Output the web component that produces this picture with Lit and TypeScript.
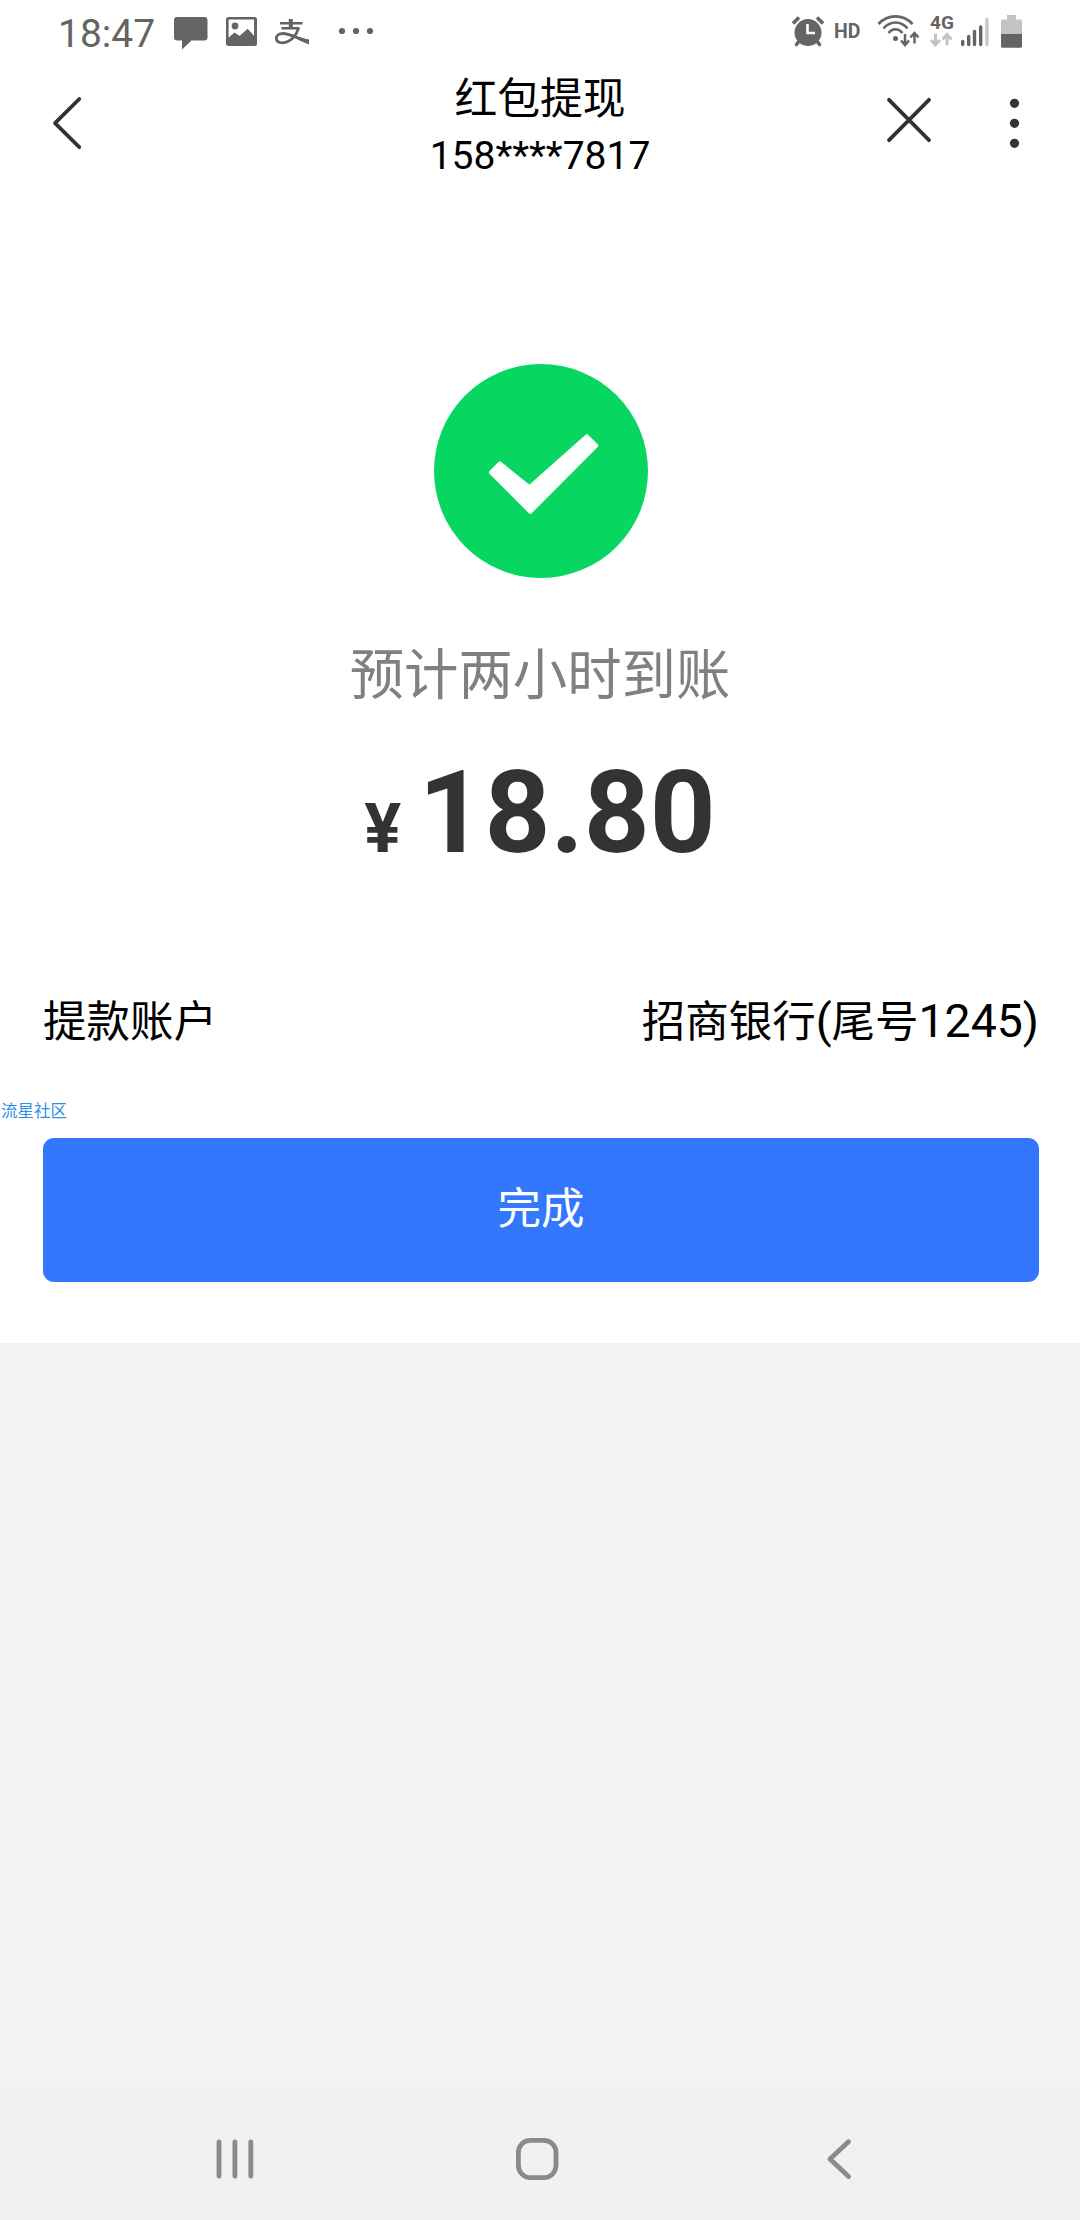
import { LitElement, html, css, svg } from "lit";
import { customElement, property } from "lit/decorators.js";

const INK = "#646464";

@customElement("status-bar")
class StatusBar extends LitElement {
  static styles = css`
    :host { display: flex; justify-content: space-between; height: 64px; padding: 0 58px 0 58px; box-sizing: border-box; color: #646464; }
    .side { display: flex; align-items: flex-start; }
    svg { display: block; flex: none; overflow: visible; }
    .time { font-size: 39px; line-height: 46px; padding-top: 11px; width: 116px; }
    .chat { margin-top: 17px; margin-right: 18px; }
    .photo { margin-top: 17px; margin-right: 18px; }
    .pay { margin-top: 18px; margin-right: 28px; }
    .more { margin-top: 27px; }
    .alarm { margin-top: 15px; margin-right: 9px; }
    .hd { font-size: 19.5px; font-weight: 700; line-height: 22px; padding-top: 21px; width: 43px; }
    .wifi { margin-top: 13px; margin-right: 11px; }
    .net { display: flex; flex-direction: column; width: 31px; }
    .gen { font-size: 19px; font-weight: 700; line-height: 20px; padding-top: 13px; height: 20px; }
    .signal { margin-top: 17px; margin-right: 12px; }
    .battery { margin-top: 15px; }
  `;
  render() {
    return html`
      <div class="side">
        <span class="time">18:47</span>
        <svg class="chat" width="34" height="33" viewBox="174 17 34 33">
          <path fill=${INK} d="M177 17h27.500a3 3 0 0 1 3 3v17.500a3 3 0 0 1-3 3H191.500L182 49.500V40.500H177a3 3 0 0 1-3-3V20a3 3 0 0 1 3-3z"/>
        </svg>
        <svg class="photo" width="31" height="30" viewBox="226 17 31 30">
          <path fill=${INK} fill-rule="evenodd" d="M228.500 17h26a2.500 2.500 0 0 1 2.500 2.500v24a2.500 2.500 0 0 1-2.500 2.500h-26a2.500 2.500 0 0 1-2.500-2.500v-24a2.500 2.500 0 0 1 2.500-2.500zM228.600 19.600V37.500l6-5 5 3.600 8-7.300 6.500 7V19.600z"/>
          <circle cx="235" cy="26" r="3.400" fill=${INK}/>
        </svg>
        <svg class="pay" width="35" height="28" viewBox="275 18 35 28">
          <g fill="none" stroke=${INK}>
            <path stroke-width="2.400" d="M280 23.300h22.500M281.500 28.300h18"/>
            <path stroke-width="4" d="M290.800 19v9.300"/>
            <path stroke-width="2.800" d="M298.500 28.300C296.500 35 290.500 42.800 282.500 42.800C278.500 42.800 276.300 41 276.300 38.300C276.300 35.500 279 33.500 283 33.500C289.500 33.500 298 38.500 309 41.500"/>
          </g>
          <path fill=${INK} d="M292 34.500C298 37 303 38.500 309 39.500V44.500C302 42 297 39 291 36z"/>
        </svg>
        <svg class="more" width="36" height="8" viewBox="337 27 36 8">
          ${[341, 355, 369].map((x) => svg`<circle cx=${x} cy="31" r="3.100" fill=${INK}/>`)}
        </svg>
      </div>
      <div class="side">
        <svg class="alarm" width="34" height="33" viewBox="789 15 34 33">
          <circle cx="806" cy="32.500" r="13.500" fill=${INK}/>
          <g fill="none" stroke=${INK} stroke-width="3.600">
            <path d="M791 23.500l6-6M821 23.500l-6-6"/>
            <path stroke-linecap="round" d="M798 40l-3.500 4.500M814 40l3.500 4.500"/>
          </g>
          <path fill="none" stroke="#fff" stroke-width="2.600" d="M805.500 24v9h7.500"/>
        </svg>
        <span class="hd">HD</span>
        <svg class="wifi" width="42" height="35" viewBox="876 13 42 35">
          <g fill="none" stroke=${INK} stroke-width="2.700">
            <path d="M877.500 24C887 13.800 902 13.800 911.500 24"/>
            <path d="M882.500 28.500C889 20.500 900 20.500 906.500 28.500"/>
            <path d="M887.500 33C891.500 28 897.500 28 901.500 33"/>
            <path stroke-width="2.500" d="M904 34v10.500M900 40.500l4 4.500 4-4.500M913.500 43.500V33.500M909.500 37.300l4-4.300 4 4.300"/>
          </g>
          <circle cx="894.500" cy="38.500" r="2.500" fill=${INK}/>
        </svg>
        <div class="net">
          <span class="gen">4G</span>
          <svg width="24" height="14" viewBox="930 34 24 14">
            <path fill="none" stroke="#c3c3c3" stroke-width="3" d="M935.500 34.500v11M931 41l4.500 5 4.500-5M947 46.500V36M942.500 40.500l4.500-5 4.500 5"/>
          </svg>
        </div>
        <svg class="signal" width="28" height="30" viewBox="961 17 28 30">
          <g fill="none" stroke-linecap="round" stroke-width="3.400">
            <path stroke=${INK} d="M962.700 41.500v3M968.700 36.500v8M974.500 31.500v13M980.700 27v17.500"/>
            <path stroke="#c6c6c6" d="M986.900 19.500v25"/>
          </g>
        </svg>
        <svg class="battery" width="21" height="33" viewBox="1001 15 21 33">
          <path fill="#c3c3c3" d="M1007 15h9v4.500h4.500a1.500 1.500 0 0 1 1.500 1.500v13h-21V21a1.500 1.500 0 0 1 1.500-1.500h4.500z"/>
          <path fill=${INK} d="M1001 34h21v12.300a1.500 1.500 0 0 1-1.500 1.500h-18a1.500 1.500 0 0 1-1.500-1.500z"/>
        </svg>
      </div>
    `;
  }
}

@customElement("title-bar")
class TitleBar extends LitElement {
  @property() heading = "";
  @property() phone = "";
  static styles = css`
    :host { display: grid; grid-template-columns: 1fr auto 1fr; height: 126px; padding: 0 52px; box-sizing: border-box; }
    .text { display: flex; flex-direction: column; align-items: center; color: #000; }
    .heading { font-size: 42.8px; line-height: 60px; height: 60px; padding-top: 5px; }
    .phone { font-size: 39px; line-height: 46px; padding-top: 4px; }
    .start { padding-top: 32px; }
    .end { display: flex; justify-content: flex-end; gap: 78px; padding: 32px 8px 0 0; }
    svg { display: block; overflow: visible; }
  `;
  render() {
    return html`
      <div class="start">
        <svg width="30" height="54" viewBox="52 96 30 54"><path fill="none" stroke="#333" stroke-width="3.800" stroke-linecap="round" stroke-linejoin="round" d="M79.300 99L55 123.200L79.300 147.200"/></svg>
      </div>
      <div class="text"><div class="heading">${this.heading}</div><div class="phone">${this.phone}</div></div>
      <div class="end">
        <svg width="46" height="48" viewBox="886 96 46 48"><path fill="none" stroke="#333" stroke-width="3.800" stroke-linecap="round" d="M889 99.800L929 140.200M929 99.800L889 140.200"/></svg>
        <svg width="10" height="54" viewBox="1010 96 10 54">${[103.3, 123.3, 143.3].map((y) => svg`<circle cx="1014.500" cy=${y} r="4.600" fill="#333"/>`)}</svg>
      </div>
    `;
  }
}

@customElement("nav-bar")
class NavBar extends LitElement {
  static styles = css`
    :host { display: flex; align-items: center; height: 127px; padding: 5px 0 0 216px; box-sizing: border-box; background: #f1f1f1; }
    svg { display: block; overflow: visible; }
    .home { margin: 0 268px 0 261px; }
  `;
  render() {
    return html`
      <svg width="38" height="42" viewBox="216 2138 38 42"><path fill="none" stroke="#8a8a8a" stroke-width="4.800" stroke-linecap="round" d="M219 2141.800v34.500M234.900 2141.800v34.500M250.800 2141.800v34.500"/></svg>
      <svg class="home" width="44" height="42" viewBox="515 2138 44 42"><rect x="518.400" y="2140.400" width="37.600" height="37.200" rx="12" fill="none" stroke="#8a8a8a" stroke-width="4.800"/></svg>
      <svg width="25" height="42" viewBox="827 2138 25 42"><path fill="none" stroke="#8a8a8a" stroke-width="4.800" stroke-linecap="round" stroke-linejoin="round" d="M848.500 2141.700L830 2159L848.500 2176.500"/></svg>
    `;
  }
}

@customElement("app-root")
class AppRoot extends LitElement {
  static styles = css`
    :host { display: flex; flex-direction: column; width: 1080px; height: 2220px; overflow: hidden; background: #f2f2f2; font-family: Roboto, "Noto Sans CJK SC", sans-serif; }
    .sheet { display: flex; flex-direction: column; height: 1343px; background: #fff; flex: none; }
    .result { display: flex; flex-direction: column; align-items: center; padding-top: 173px; }
    .done { display: block; margin-left: 2px; }
    .hint { font-size: 54.4px; line-height: 80px; height: 80px; padding-top: 57px; color: #808080; }
    .amount { display: flex; align-items: baseline; height: 136px; color: #333; font-weight: 700; padding-top: 29px; white-space: pre; }
    .sign { font-size: 69px; line-height: 70px; }
    .value { font-size: 115px; line-height: 136px; }
    .account { display: flex; justify-content: space-between; align-items: baseline; height: 66px; padding: 108px 41px 0 43px; font-size: 43.5px; line-height: 64px; color: #000; }
    .latin { font-size: 46.4px; }
    .mark { font-size: 16.5px; line-height: 20px; height: 20px; padding: 47px 0 0 1px; color: #2f8fe8; }
    .button { margin: 16px 41px 0 43px; height: 144px; flex: none; border: 0; border-radius: 11px; background: #3377ff; color: #fff; font: inherit; font-size: 43.5px; line-height: 60px; padding: 0; }
    .blank { flex: 1; }
  `;
  render() {
    return html`
      <div class="sheet">
        <status-bar></status-bar>
        <title-bar heading="红包提现" phone="158****7817"></title-bar>
        <div class="result">
          <svg class="done" width="216" height="216" viewBox="433 363 216 216">
            <circle cx="541" cy="471" r="107" fill="#07d661"/>
            <path fill="#fff" stroke="#fff" stroke-width="4" stroke-linejoin="round" d="M490.900 472.300L499.800 463.400L529.500 487.200L586.900 436.300L596.300 445.600L530.300 511.800z"/>
          </svg>
          <div class="hint">预计两小时到账</div>
          <div class="amount"><span class="sign">¥ </span><span class="value">18.80</span></div>
        </div>
        <div class="account">
          <span>提款账户</span>
          <span>招商银行<span class="latin">(</span>尾号<span class="latin">1245)</span></span>
        </div>
        <div class="mark">流星社区</div>
        <button class="button">完成</button>
      </div>
      <div class="blank"></div>
      <nav-bar></nav-bar>
    `;
  }
}
